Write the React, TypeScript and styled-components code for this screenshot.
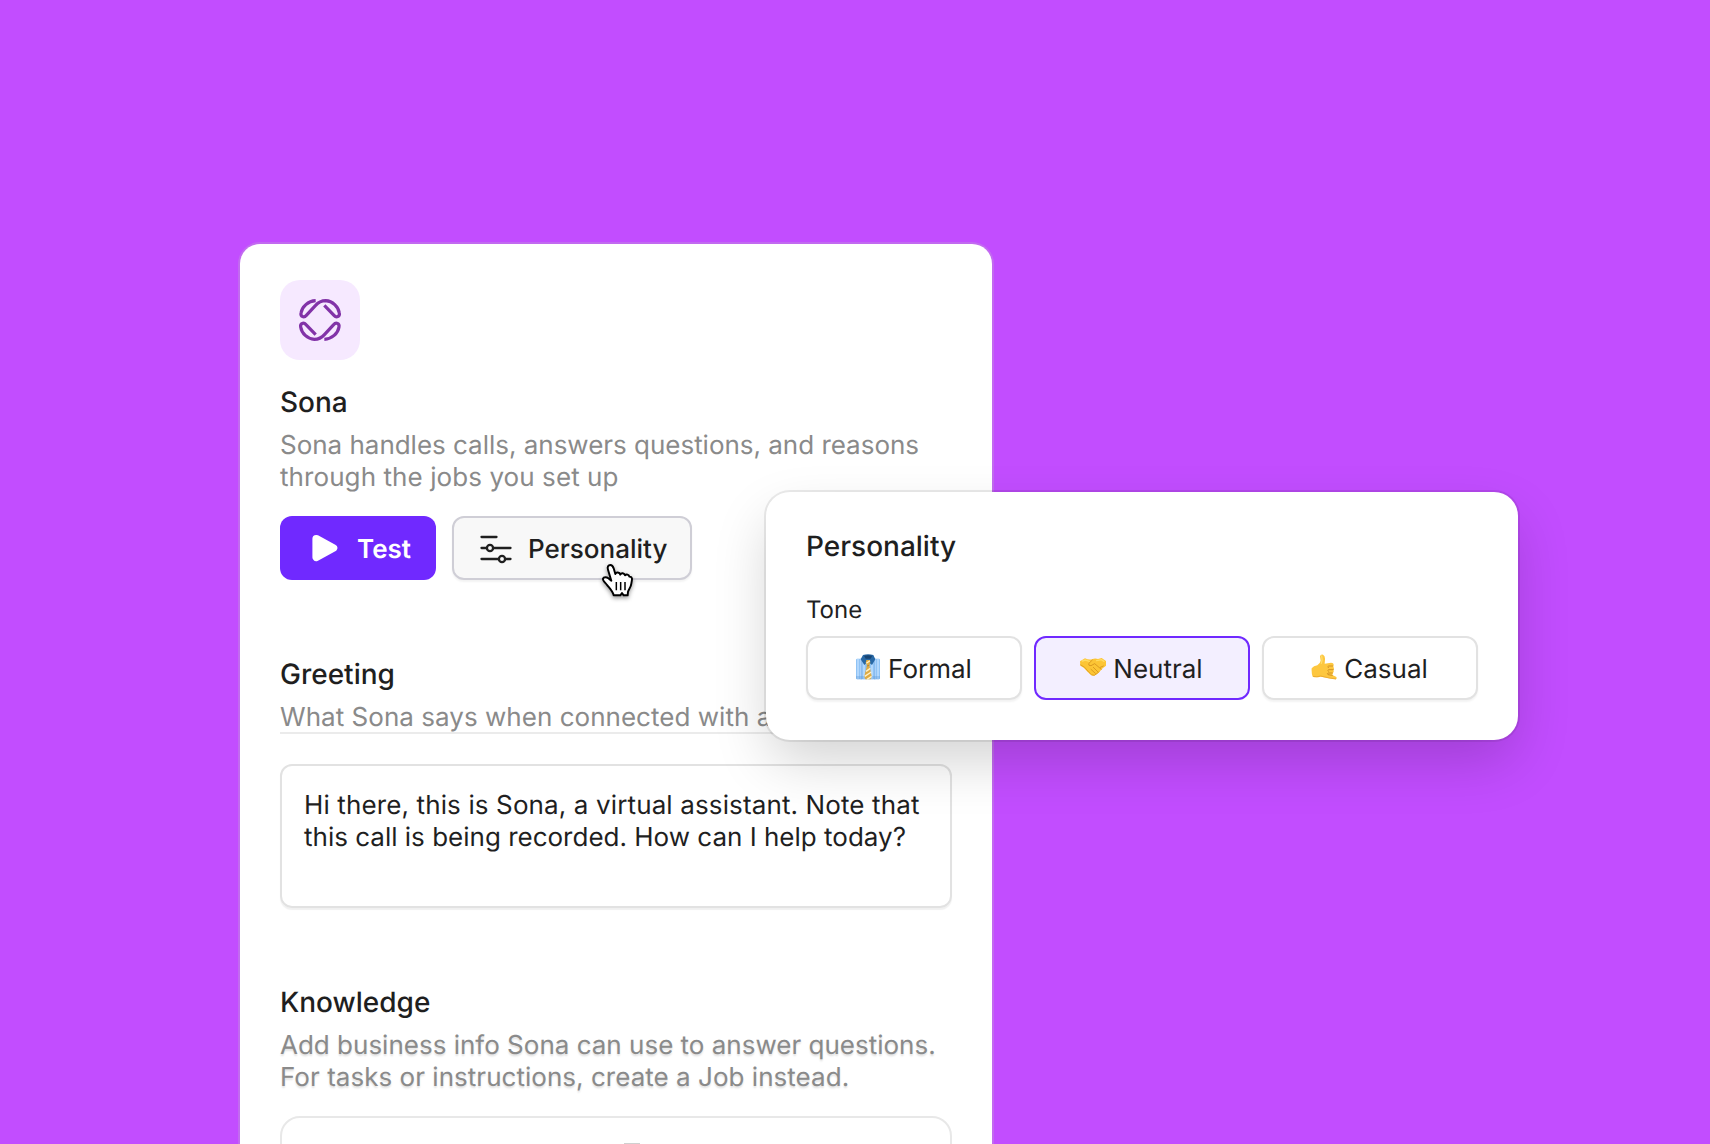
import React, { ReactNode } from 'react';
import styled, { createGlobalStyle, css } from 'styled-components';

const Colors = {
  purple: '#c24dff',
  violet: '#7029ff',
  violetTint: '#f3efff',
  text: '#1f1f1f',
  muted: '#8a8a8a',
  border: '#e2e2e2',
  logo: '#8233a8',
};

const GlobalStyle = createGlobalStyle`
  * {
    box-sizing: border-box;
  }
  body {
    margin: 0;
    background: ${Colors.purple};
  }
`;

const Stage = styled.main`
  position: relative;
  width: 1710px;
  height: 1144px;
  padding: 244px 0 0 240px;
  overflow: hidden;
  background: ${Colors.purple};
  color: ${Colors.text};
  font-family: Inter, 'Liberation Sans', sans-serif;
  font-size: 26px;
  line-height: 32px;
  text-rendering: geometricPrecision;
`;

const Card = styled.section`
  width: 752px;
  height: 1000px;
  padding: 36px 40px;
  border-radius: 20px;
  background: #fff;
  box-shadow: 0 0 0 2px rgba(195, 195, 195, 0.25);
`;

const LogoTile = styled.div`
  display: flex;
  align-items: center;
  justify-content: center;
  width: 80px;
  height: 80px;
  margin-bottom: 24px;
  border-radius: 20px;
  background: #f6e9ff;
`;

const Section = styled.section`
  margin-bottom: 76px;
`;

const Title = styled.h2`
  margin: 0 0 8px;
  font-size: 28px;
  font-weight: 500;
  line-height: 36px;
`;

const Description = styled.p<{ divided?: boolean; shaded?: boolean }>`
  height: 64px;
  margin: 0 0 24px;
  padding-top: 2px;
  color: ${Colors.muted};
  white-space: nowrap;
  ${({ divided }) =>
    divided &&
    css`
      height: 34px;
      margin-bottom: 30px;
      border-bottom: 2px solid #ebebeb;
    `}
  ${({ shaded }) =>
    shaded &&
    css`
      text-shadow: 0 2px 2px rgba(0, 0, 0, 0.12);
    `}
`;

const Line = styled.span<{ tracking?: number }>`
  display: block;
  letter-spacing: ${({ tracking = 0 }) => tracking}px;
`;

const Actions = styled.div`
  display: flex;
  gap: 16px;
`;

const primary = css`
  width: 156px;
  padding: 3px 0 0 32px;
  gap: 19px;
  border: none;
  background: ${Colors.violet};
  color: #fff;
  font-weight: 600;
`;

const secondary = css`
  width: 240px;
  padding: 3px 0 0 26px;
  gap: 16px;
  border: 2px solid #cfced6;
  background: #f8f8f8;
  color: ${Colors.text};
  font-weight: 500;
  box-shadow: 0 2px 2px rgba(0, 0, 0, 0.05);
`;

const Button = styled.button<{ btnTheme?: 'primary' | 'secondary' }>`
  display: flex;
  align-items: center;
  height: 64px;
  border-radius: 12px;
  font-family: inherit;
  font-size: 26px;
  line-height: 32px;
  text-rendering: inherit;
  white-space: nowrap;
  svg {
    margin-top: -3px;
  }
  ${({ btnTheme = 'primary' }) => (btnTheme === 'primary' ? primary : secondary)}
`;

const Message = styled.div`
  height: 144px;
  padding: 24px 22px;
  border: 2px solid ${Colors.border};
  border-radius: 12px;
  box-shadow: 0 2px 1px rgba(0, 0, 0, 0.06);
  white-space: nowrap;
`;

const Sources = styled.div`
  display: flex;
  justify-content: center;
  height: 200px;
  padding-top: 25px;
  border: 2px solid #e8e8e8;
  border-radius: 20px;
`;

const Handle = styled.span`
  width: 16px;
  height: 12px;
  margin-left: 32px;
  border-top: 2px solid #d0d0d0;
`;

const Popover = styled.aside`
  position: absolute;
  left: 766px;
  top: 492px;
  width: 752px;
  padding: 36px 40px 40px;
  border-radius: 24px;
  background: #fff;
  box-shadow:
    0 0 0 2px rgba(0, 0, 0, 0.08),
    0 24px 56px -4px rgba(0, 0, 0, 0.18);
`;

const Label = styled.div`
  margin: 28px 0 8px;
  font-size: 24px;
  line-height: 36px;
`;

const Options = styled.div`
  display: grid;
  grid-template-columns: repeat(3, 1fr);
  gap: 12px;
`;

const Option = styled.button<{ selected?: boolean }>`
  display: flex;
  align-items: center;
  justify-content: center;
  gap: 7px;
  height: 64px;
  padding: 3px 1px 0 0;
  border: 2px solid ${({ selected }) => (selected ? Colors.violet : Colors.border)};
  border-radius: 12px;
  background: ${({ selected }) => (selected ? Colors.violetTint : '#fff')};
  color: ${Colors.text};
  font-family: inherit;
  font-size: 26px;
  line-height: 32px;
  text-rendering: inherit;
  box-shadow: ${({ selected }) => (selected ? 'none' : '0 2px 2px rgba(0, 0, 0, 0.05)')};
  svg {
    margin-top: -5px;
  }
`;

const Pointer = styled.svg`
  position: absolute;
  left: 595px;
  top: 555px;
  filter: drop-shadow(0 2px 2px rgba(0, 0, 0, 0.4));
`;

const SonaLogo = () => (
  <svg width="60" height="60" viewBox="0 0 180 180" fill="none" stroke={Colors.logo} strokeWidth="9.6">
    <path d="M77 32C54 33 36 50 33 69C31 80 42 84 49 76L76 47C84 38 94 32 107 32C128 33 145 50 148 69C150 80 139 84 132 76L103 46" />
    <path
      transform="rotate(180 90 90)"
      d="M77 32C54 33 36 50 33 69C31 80 42 84 49 76L76 47C84 38 94 32 107 32C128 33 145 50 148 69C150 80 139 84 132 76L103 46"
    />
  </svg>
);

const PlayIcon = () => (
  <svg width="26" height="28" viewBox="0 0 26 28">
    <path
      d="M4.2 4.7L21.5 14L4.2 23.3Z"
      fill="#fff"
      stroke="#fff"
      strokeWidth="7.6"
      strokeLinejoin="round"
    />
  </svg>
);

const SlidersIcon = () => (
  <svg width="32" height="32" viewBox="0 0 32 32" fill="none" stroke={Colors.text} strokeWidth="2.3" strokeLinecap="round">
    <path d="M1.5 5H16.5M1.5 16H6.5M13.5 16H30.5M1.5 27H18.5M25.5 27H30.5" />
    <circle cx="10" cy="16" r="3.1" />
    <circle cx="22" cy="27" r="3.1" />
  </svg>
);

const ShirtEmoji = () => (
  <svg width="26" height="26" viewBox="0 0 78 78">
    <rect x="3" y="14" width="72" height="62" rx="4" fill="#8fc3f5" />
    <path
      d="M9 14V76M18 12V76M27 18V76M51 18V76M60 12V76M69 14V76"
      stroke="#c3e2ff"
      strokeWidth="4"
    />
    <path d="M19 16V76M59 16V76" stroke="#5b95d6" strokeWidth="1.5" />
    <path d="M3 66H75V73Q75 76 72 76H6Q3 76 3 73Z" fill="#5d98d8" opacity=".35" />
    <path d="M24 3Q39 -1 55 3L61 16L51 33L39 23L28 33L17 16Z" fill="#2868a6" />
    <path d="M27 5Q39 2 52 5L47 14H32Z" fill="#174574" />
    <path d="M34 18H44L46 27L43 34L50 67L47 76H31L28 67L36 34L32 27Z" fill="#dfab42" />
    <path d="M34 28L45 20M33 52L46 43M29 67L49 54M36 76L50 67" stroke="#fff0c8" strokeWidth="4" />
    <path d="M35 36L43 34" stroke="#a97622" strokeWidth="2" />
  </svg>
);

const HandshakeEmoji = () => (
  <svg width="26" height="26" viewBox="0 0 78 78">
    <path
      d="M0 22L15 13Q25 18 36 16Q45 11 54 15L65 12L78 21V35L68 43L58 54Q48 65 39 65Q32 64 24 55L11 41L1 35Z"
      fill="#fcc535"
    />
    <path d="M1 32L14 40L27 55Q34 65 43 64L58 53" fill="none" stroke="#dc9a1c" strokeWidth="2.5" />
    <path
      d="M37 18L26 29Q25 36 33 35L44 29L64 46M40 40L53 53M33 46L46 58M61 40L70 36"
      fill="none"
      stroke="#cf8a18"
      strokeWidth="2.2"
      strokeLinecap="round"
      strokeLinejoin="round"
    />
    <path d="M7 21L16 18L28 22M50 20L64 17L72 22" fill="none" stroke="#ffdc63" strokeWidth="4" strokeLinecap="round" />
  </svg>
);

const CallMeEmoji = () => (
  <svg width="26" height="26" viewBox="0 0 78 78">
    <path
      d="M2 43Q8 35 19 34Q27 29 29 20L27 7Q29 0 36 2Q43 6 42 17L41 29L60 26Q68 26 68 33L67 39Q71 43 67 48Q70 53 66 57L64 63L75 68Q80 73 74 76L55 73L29 68Q14 72 5 68Q1 58 2 43Z"
      fill="#fdc73f"
    />
    <path
      d="M65 36H53Q48 37 52 41M67 47H53Q48 48 52 52M64 57H51Q47 59 51 62L64 64"
      fill="none"
      stroke="#cc8a20"
      strokeWidth="2.6"
      strokeLinecap="round"
    />
    <path d="M6 67Q18 70 29 66L54 72L75 75" fill="none" stroke="#e9a62c" strokeWidth="2.5" />
    <path d="M32 6Q35 17 31 28" fill="none" stroke="#ffdd6b" strokeWidth="4" strokeLinecap="round" />
  </svg>
);

const HandCursor = () => (
  <Pointer width="50" height="50" viewBox="0 0 150 150">
    <path
      d="M49 77L39 44C36 36 40 30 46 30C51 30 54 34 56 40L61 57C63 51 74 51 76 59C79 52 88 54 90 61C94 56 102 59 103 65C108 64 112 68 111 74L109 86C108 97 101 103 99 110L98 121H86L81 114L76 121H56C54 110 43 99 37 91C30 82 22 77 24 71C26 65 35 66 40 70Z"
      fill="#fff"
      stroke="#000"
      strokeWidth="5.8"
      strokeLinejoin="round"
    />
    <path d="M64 81V106M77 81V106M90 81V106" stroke="#000" strokeWidth="4.5" />
  </Pointer>
);

const tones: { name: string; icon: ReactNode; selected?: boolean }[] = [
  { name: 'Formal', icon: <ShirtEmoji /> },
  { name: 'Neutral', icon: <HandshakeEmoji />, selected: true },
  { name: 'Casual', icon: <CallMeEmoji /> },
];

const App = () => (
  <Stage>
    <GlobalStyle />
    <Card>
      <LogoTile>
        <SonaLogo />
      </LogoTile>
      <Section>
        <Title>Sona</Title>
        <Description>
          <Line tracking={-0.02}>Sona handles calls, answers questions, and reasons</Line>
          <Line tracking={0.08}>through the jobs you set up</Line>
        </Description>
        <Actions>
          <Button>
            <PlayIcon />
            Test
          </Button>
          <Button btnTheme="secondary">
            <SlidersIcon />
            Personality
          </Button>
        </Actions>
      </Section>
      <Section>
        <Title>Greeting</Title>
        <Description divided>
          <Line tracking={0.03}>What Sona says when connected with a caller</Line>
        </Description>
        <Message>
          <Line tracking={0.125}>Hi there, this is Sona, a virtual assistant. Note that</Line>
          <Line>this call is being recorded. How can I help today?</Line>
        </Message>
      </Section>
      <Section>
        <Title>Knowledge</Title>
        <Description shaded>
          <Line>Add business info Sona can use to answer questions.</Line>
          <Line tracking={0.03}>For tasks or instructions, create a Job instead.</Line>
        </Description>
        <Sources>
          <Handle />
        </Sources>
      </Section>
    </Card>
    <Popover>
      <Title>Personality</Title>
      <Label>Tone</Label>
      <Options>
        {tones.map(({ name, icon, selected }) => (
          <Option key={name} selected={selected}>
            {icon}
            {name}
          </Option>
        ))}
      </Options>
    </Popover>
    <HandCursor />
  </Stage>
);

export default App;
